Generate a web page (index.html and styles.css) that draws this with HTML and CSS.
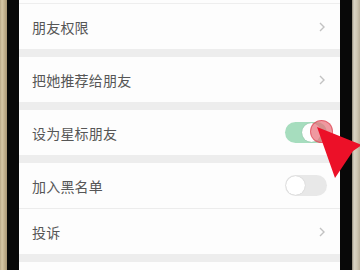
FILE: index.html
```html
<!DOCTYPE html>
<html lang="zh">
<head>
<meta charset="utf-8">
<link rel="stylesheet" href="styles.css">
</head>
<body>
<div class="device">
  <div class="bezel bezel-left"><div class="gold"></div><div class="black"></div></div>
  <div class="screen">
    <div class="cell cell-top">
      <span class="label">朋友权限</span>
      <svg class="chev" viewBox="0 0 6 10"><path d="M1 1 L5 5 L1 9" /></svg>
    </div>
    <div class="gap"></div>
    <div class="cell">
      <span class="label">把她推荐给朋友</span>
      <svg class="chev" viewBox="0 0 6 10"><path d="M1 1 L5 5 L1 9" /></svg>
    </div>
    <div class="gap"></div>
    <div class="cell">
      <span class="label">设为星标朋友</span>
      <div class="switch on"><div class="knob"></div><div class="touch"></div></div>
    </div>
    <div class="gap"></div>
    <div class="cell cell-line">
      <span class="label">加入黑名单</span>
      <div class="switch"><div class="knob"></div></div>
    </div>
    <div class="cell">
      <span class="label">投诉</span>
      <svg class="chev" viewBox="0 0 6 10"><path d="M1 1 L5 5 L1 9" /></svg>
    </div>
    <div class="gap"></div>
    <div class="rest"></div>
  </div>
  <div class="bezel bezel-right"><div class="black"></div><div class="gold"></div></div>
  <svg class="pointer" viewBox="0 0 50 60" width="50" height="60">
    <polygon points="3,5 48,23 39,29 21,56" />
  </svg>
</div>
</body>
</html>
```

FILE: styles.css
```css
* { box-sizing: border-box; }
html, body { margin: 0; padding: 0; }
body {
  width: 360px;
  height: 270px;
  overflow: hidden;
  font-family: "Noto Sans CJK SC", "Noto Sans", sans-serif;
  background: #000;
}
.device {
  position: relative;
  display: flex;
  width: 360px;
  height: 270px;
}
.bezel { display: flex; height: 100%; }
.bezel-left .gold {
  width: 7px;
  background: linear-gradient(90deg, #b9a886 0, #d6c7a6 2px, #c6b592 4px, #a89674 7px);
}
.bezel-left .black { width: 12px; background: #080808; }
.bezel-right .black { width: 12px; background: #080808; }
.bezel-right .gold {
  width: 8px;
  background: linear-gradient(90deg, #8f8878 0, #d9d3c4 2px, #cfc7b4 5px, #b8ae98 8px);
}
.screen {
  width: 321px;
  height: 100%;
  display: flex;
  flex-direction: column;
  background: #fdfdfd;
}
.cell {
  height: 45px;
  flex: none;
  display: flex;
  align-items: center;
  justify-content: space-between;
  padding: 0 13px 0 13px;
  background: #fdfdfd;
}
.cell-top {
  margin-top: 3px;
  border-top: 1px solid #eeeeee;
  height: 46px;
}
.cell-line { border-bottom: 1px solid #ececec; height: 46px; }
.label {
  font-size: 14px;
  color: #565656;
  letter-spacing: 0.2px;
}
.chev {
  width: 6px;
  height: 10px;
  margin-right: 2px;
}
.chev path {
  fill: none;
  stroke: #c2c2c2;
  stroke-width: 1.4;
}
.gap {
  height: 8px;
  flex: none;
  background: #ededed;
}
.rest { flex: 1; background: #fdfdfd; }
.switch {
  position: relative;
  width: 42px;
  height: 21px;
  border-radius: 11px;
  background: #e8e8e8;
}
.switch .knob {
  position: absolute;
  left: 1px;
  top: 1px;
  width: 19px;
  height: 19px;
  border-radius: 50%;
  background: #fff;
  box-shadow: 0 0 1px rgba(0,0,0,0.25);
}
.switch.on { background: #a6ddbe; }
.switch.on .knob { left: 17px; }
.switch .touch {
  position: absolute;
  left: 25px;
  top: -2px;
  width: 23px;
  height: 23px;
  border-radius: 50%;
  background: rgba(232, 110, 120, 0.7);
  border: 1px solid rgba(220, 60, 75, 0.6);
}
.pointer {
  position: absolute;
  left: 314px;
  top: 122px;
}
.pointer polygon { fill: #ec1028; }
```
